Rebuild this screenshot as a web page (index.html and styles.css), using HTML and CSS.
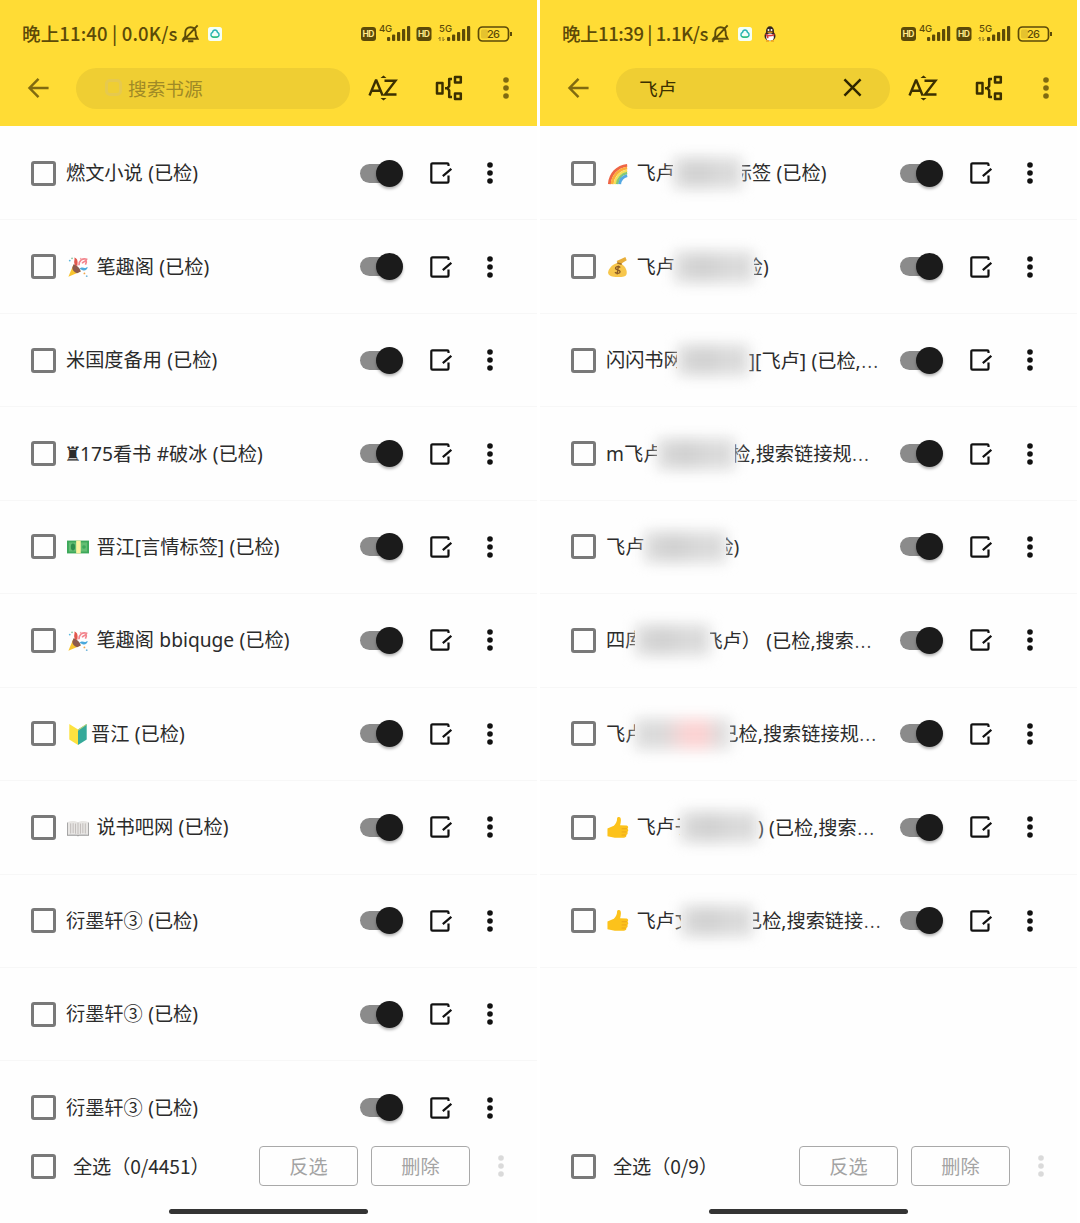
FILE: index.html
```html
<!DOCTYPE html>
<html lang="zh-CN">
<head>
    <meta charset="UTF-8">
    <meta name="viewport" content="width=device-width, initial-scale=1.0">
    <title>书源管理</title>
    <link rel="stylesheet" href="styles.css">
</head>
<body>

<svg class="defs" width="0" height="0">
    <symbol id="mute" viewBox="0 0 20 20">
        <path d="M4.500 14.500V9.200C4.500 5.800 6.800 3.400 10 3.400c3 0 5.300 2.200 5.500 5.600v2.500l2 4H2.500l2-2.600M7.500 18.200h5.500M1.500 18.500L17.500 1.500" fill="none" stroke="currentColor" stroke-width="2"/>
    </symbol>
    <symbol id="app" viewBox="0 0 14 14">
        <rect width="14" height="14" rx="2.500" fill="#f4fff8"/>
        <path d="M4.600 5.200C5.200 2.200 8.800 2.200 9.400 5.200c2.600 1.200 2 4.900-.6 5H5.200c-2.600-.1-3.200-3.800-.6-5z" fill="none" stroke="#2cb6b4" stroke-width="1.500"/>
        <path d="M4 9.500c1 .8 4.500 1 6 0" stroke="#35c46a" stroke-width="1.300" fill="none"/>
    </symbol>
    <symbol id="qq" viewBox="0 0 14 16">
        <ellipse cx="7" cy="10" rx="5.500" ry="5" fill="#33251f"/>
        <ellipse cx="7" cy="5" rx="4" ry="4.700" fill="#33251f"/>
        <ellipse cx="7" cy="11.200" rx="3.800" ry="3.600" fill="#fff"/>
        <circle cx="5.500" cy="4" r="1" fill="#fff"/><circle cx="8.500" cy="4" r="1" fill="#fff"/>
        <path d="M4.500 6.200h5" stroke="#f5a623" stroke-width="1.200"/>
        <path d="M2.500 7.500c2.500 1.800 6.500 1.800 9 0v1.700c-2 1.200-4.500 1.300-6 1.100v2H3.800V9.700l-1.300-.6z" fill="#dc3a3a"/>
        <path d="M3 15h3M8 15h3" stroke="#f0a020" stroke-width="1.500"/>
    </symbol>
    <symbol id="back" viewBox="0 0 24 24">
        <path d="M23 12H2.500M12 2L2.200 12 12 22" fill="none" stroke="currentColor" stroke-width="2.700"/>
    </symbol>
    <symbol id="close" viewBox="0 0 20 20">
        <path d="M1.500 1.500l17 17M18.500 1.500l-17 17" stroke="currentColor" stroke-width="2.600"/>
    </symbol>
    <symbol id="sort" viewBox="0 0 30 28">
        <path d="M1.500 21.500L7.800 6.500h.6l6.200 15M3.800 16.700h8.800M16.500 6.700h11L17 20.500h11.500" fill="none" stroke="currentColor" stroke-width="2.400"/>
        <path d="M12.500 4l3-2.500 3 2.500zM12.500 24l3 2.500 3-2.500z" fill="currentColor"/>
    </symbol>
    <symbol id="group" viewBox="0 0 28 26">
        <path d="M2 8h5.500v10.500H2zM10 13.200h2.500M17 4h-2.800v7l-1.700 2.200 1.700 2.200V22H17M20 2h5.800v5.500h-5.800zM20 18.500h5.800v5.500h-5.800z" fill="none" stroke="currentColor" stroke-width="2.500" stroke-linejoin="round"/>
    </symbol>
    <symbol id="more" viewBox="0 0 6 24">
        <circle cx="3" cy="4" r="2.800"/><circle cx="3" cy="12" r="2.800"/><circle cx="3" cy="20" r="2.800"/>
    </symbol>
    <symbol id="edit" viewBox="0 0 22 22">
        <path d="M18.500 4V2.500a1.200 1.200 0 0 0-1.200-1.200H2.500a1.200 1.200 0 0 0-1.200 1.200v17a1.200 1.200 0 0 0 1.200 1.200h14.800a1.200 1.200 0 0 0 1.200-1.200V13.500M12.800 14.200L21.300 6.800" fill="none" stroke="currentColor" stroke-width="2.200"/>
    </symbol>

    <symbol id="party" viewBox="0 0 24 24">
        <path d="M7 9.500L1.500 22.500 15 17z" fill="#f9c52f"/>
        <path d="M7 9.500c.5-2 7.500 3.500 8 7.500l-4 1.700C7.500 17.500 5.500 15 5.800 12.500z" fill="#8d5a4c"/>
        <path d="M9 10C6.500 6 9 4 8 1.500c4 1 4 5 3.200 9.500z" fill="#e2574c"/>
        <path d="M13 10c0-5 4-8 8.500-6.500-.5 3-3.500 2-5 4.500M20 9.500c1-2 2-3 0-6" fill="none" stroke="#f2848c" stroke-width="1.800"/>
        <path d="M13.500 14c3-3 5-.5 6.500-1 1.500-.3 1.500-1.300 2.500-1-.2 3-3 4.800-5.500 3.500" fill="#4ba9dc"/>
        <circle cx="3" cy="5" r="1" fill="#5bb7de"/><circle cx="5.500" cy="2.500" r="1" fill="#8bc7a4"/><circle cx="19" cy="19" r="1" fill="#f1a54b"/><circle cx="21.500" cy="22" r="1" fill="#79b9dc"/><circle cx="15" cy="3" r="1" fill="#f5a5aa"/>
    </symbol>
    <symbol id="cash" viewBox="0 0 24 24">
        <path d="M0 5h24v14H0z" fill="#3da85a"/>
        <path d="M2 7h20v10H2z" fill="#64bd73"/>
        <ellipse cx="6.500" cy="12" rx="2.300" ry="3.800" fill="#2e8d4a"/>
        <path d="M10 5h5v14h-5z" fill="#fdf2a0"/>
        <circle cx="18.500" cy="12" r="2" fill="#3da85a"/>
    </symbol>
    <symbol id="sprout" viewBox="0 0 24 24">
        <path d="M2.500 1l9.500 6v17l-9.500-6z" fill="#fde23f"/>
        <path d="M21.500 1L12 7v17l9.500-6z" fill="#35a999"/>
        <path d="M12 7l9-6h.5v1L12 8.500z" fill="#c7d97c"/>
    </symbol>
    <symbol id="book" viewBox="0 0 24 24">
        <path d="M0 6h1v13h10l1 1 1-1h10V6h1v14.500H13l-1 .8-1-.8H0z" fill="#999"/>
        <path d="M1 5.500c3-1.500 8-1.500 11 .5 3-2 8-2 11-.5V19c-3-1-8-1-11 .5C9 18 4 18 1 19z" fill="#e8e6e4"/>
        <path d="M12 6v13.500M4 7v11M6.700 6.800v11M9.300 7.200v11M14.700 7.200v11M17.300 6.800v11M20 7v11" stroke="#bdb9b7" stroke-width="1"/>
    </symbol>
    <symbol id="rainbow" viewBox="0 0 24 24">
        <path d="M2.600 23C3.500 12 11 3.800 22 2.600" fill="none" stroke="#ee6545" stroke-width="3.200"/>
        <path d="M5.600 23C6.500 13.500 13 6.800 22 5.600" fill="none" stroke="#fbad3a" stroke-width="3.200"/>
        <path d="M8.500 23C9.500 15.500 14.500 9.800 22 8.500" fill="none" stroke="#f5df58" stroke-width="2.900"/>
        <path d="M11 23c.8-6 5-11 11-12" fill="none" stroke="#84c876" stroke-width="2.800"/>
        <path d="M13.800 23c.6-4.500 3.700-8.200 8.200-9.200" fill="none" stroke="#53a8e3" stroke-width="3.200"/>
    </symbol>
    <symbol id="money" viewBox="0 0 24 24">
        <path d="M14 8c5 2 8 7 7.500 11-.5 3.500-4 4-10 4S1 21.500 1.200 18C1.500 13.500 6 9 11 7.500z" fill="#f7c64b"/>
        <path d="M12 8l-1.500-2.500L16 3l4-2 1.500 3.500-4 2.500L15 9z" fill="#e8ae3a"/>
        <path d="M11 7.500l5 1.500" stroke="#9c6b2c" stroke-width="1.500"/>
        <path d="M14.500 12.500c-2-1.800-5.500-1-5.200 1 .3 2 5 1.500 5 3.800 0 2.200-4 2.200-5.600.5M12.500 10.500l-1.500 9.500" fill="none" stroke="#8a5a25" stroke-width="1.500"/>
    </symbol>
    <symbol id="thumb" viewBox="0 0 24 24">
        <path d="M.5 12.500l7-3c2.500-2.500 3.500-5 3.500-8 .1-2 3.500-2.200 4 .3.500 2.700-.2 5.200-.7 7.200l7 .3c2.200.2 2.200 3 1 3.400 1.300.8 1.100 3-.2 3.500.9 1.100.4 3-1 3.400.3 1.700-.8 3-2.800 3H8.500L.5 21z" fill="#fcc21b"/>
        <path d="M16 12.800h6M16 16.300h5.500M16 19.700h4.500" stroke="#eba51c" stroke-width="1"/>
    </symbol>
</svg>

<div class="screens">
    <div class="phone" id="phoneAll">
        <header class="header">
            <div class="status">
                <span class="status-time">晚上11:40 | 0.0K/s</span>
                <svg class="status-mute"><use href="#mute"/></svg>
                <svg class="status-app"><use href="#app"/></svg>
                <div class="signals"></div>
            </div>
            <div class="toolbar">
                <svg class="icon-back"><use href="#back"/></svg>
                <div class="search search-empty"><i class="search-icon"></i><span>搜索书源</span></div>
                <svg class="icon-sort"><use href="#sort"/></svg>
                <svg class="icon-group"><use href="#group"/></svg>
                <svg class="icon-more"><use href="#more"/></svg>
            </div>
        </header>
        <main class="list"></main>
        <footer class="footer">
            <div class="actions">
                <span class="checkbox"></span>
                <span class="select-all">全选（0/4451）</span>
                <button>反选</button>
                <button>删除</button>
                <svg class="icon-more"><use href="#more"/></svg>
            </div>
            <div class="home-bar"></div>
        </footer>
    </div>

    <div class="phone" id="phoneSearch">
        <header class="header">
            <div class="status">
                <span class="status-time">晚上11:39 | 1.1K/s</span>
                <svg class="status-mute"><use href="#mute"/></svg>
                <svg class="status-app"><use href="#app"/></svg>
                <svg class="status-qq"><use href="#qq"/></svg>
                <div class="signals"></div>
            </div>
            <div class="toolbar">
                <svg class="icon-back"><use href="#back"/></svg>
                <div class="search"><span>飞卢</span><svg class="icon-close"><use href="#close"/></svg></div>
                <svg class="icon-sort"><use href="#sort"/></svg>
                <svg class="icon-group"><use href="#group"/></svg>
                <svg class="icon-more"><use href="#more"/></svg>
            </div>
        </header>
        <main class="list"></main>
        <footer class="footer">
            <div class="actions">
                <span class="checkbox"></span>
                <span class="select-all">全选（0/9）</span>
                <button>反选</button>
                <button>删除</button>
                <svg class="icon-more"><use href="#more"/></svg>
            </div>
            <div class="home-bar"></div>
        </footer>
    </div>
</div>

<script src="script.js"></script>
</body>
</html>
```

FILE: styles.css
```css
* { box-sizing: border-box; }
body { margin: 0; background: #fff; color: #2b2b2b; font-family: "Noto Sans", "Noto Sans CJK SC", sans-serif; font-size: 19.200px; }
svg { display: block; flex: none; }
.defs { position: absolute; }
.screens { display: flex; gap: 3px; height: 1223px; overflow: hidden; }
.phone { width: 537px; height: 1223px; display: flex; flex-direction: column; background: #fefefe; }

/* header */
.header { height: 126px; flex: none; background: #ffdc35; }
.status { height: 67px; padding: 0 25px 0 22px; display: flex; align-items: center; color: #5c4a08; }
.status-time { width: 156px; padding-bottom: 2px; font-family: "Noto Sans CJK SC", sans-serif; font-weight: 500; font-size: 18.500px; letter-spacing: .15px; line-height: 24px; white-space: nowrap; }
.status-mute { width: 19px; height: 19px; margin-left: 3px; }
.status-app { width: 14px; height: 14px; margin-left: 8px; }
.status-qq { width: 14px; height: 16px; margin-left: 11px; }
.signals { margin-left: auto; }
.signals text { font-family: Inter, sans-serif; font-weight: 500; fill: #5c4a08; }
.signals .hd { fill: #ffe98a; font-weight: 700; }
#phoneSearch .status-time { width: 146px; letter-spacing: -.45px; }
#phoneSearch .status-app { margin-left: 8px; }

.toolbar { height: 42px; padding-left: 27px; display: flex; align-items: center; }
.icon-back { width: 23px; height: 22px; color: #806a10; }
.search { width: 274px; height: 41px; margin-left: 26px; padding: 0 28px 2px 23px; border-radius: 21px; background: #efce33; display: flex; align-items: center; justify-content: space-between; font-size: 18.700px; color: #3b2f00; }
.search-empty { justify-content: flex-start; color: #a08a26; padding-left: 29px; }
.search-icon { width: 17px; height: 17px; margin-right: 6px; border: 3px solid #e6c94e; border-radius: 5px; }
.icon-close { width: 19px; height: 19px; color: #2e2600; }
.icon-sort { width: 30px; height: 28px; margin-left: 18px; color: #3b2f00; }
.icon-group { width: 28px; height: 26px; margin-left: 37px; color: #3b2f00; }
.toolbar .icon-more { width: 6px; height: 24px; margin-left: 40px; fill: #806a10; }

/* list */
.list { flex: 1; min-height: 0; padding-top: 1px; overflow: hidden; }
.row { height: 93.450px; padding-left: 31px; border-bottom: 1px solid #f7f7f7; display: flex; align-items: center; }
.checkbox { width: 25px; height: 25px; flex: none; border: 3px solid #797979; border-radius: 3px; }
.name { width: 294px; margin-left: 10px; display: flex; align-items: center; white-space: pre; line-height: 28px; word-spacing: .4px; }
.emoji { width: 22px; height: 22px; margin: 1px 2px 0 1px; }
.rook { width: 14px; display: inline-block; font-family: "DejaVu Sans", sans-serif; font-size: 20px; text-indent: -2px; }
.dots { display: inline-block; line-height: 1; font-family: "Open Sans", "Noto Sans", sans-serif; font-weight: 300; font-size: 25px; color: #444; }
.smudge { position: relative; z-index: 1; height: 40px; flex: none; background: #fdfdfd; }
.smudge::before { content: ""; position: absolute; inset: 5px 0; background: linear-gradient(90deg, #dedede, #d0d0d0 35%, #d9d9d9 65%, #dcdcdc); filter: blur(7px); }
.smudge.red::before { background: linear-gradient(90deg, #dcdcdc, #dadada 30%, #f7d6d6 50%, #ffd0d0 68%, #dfdfdf 90%, #dadada); }
.switch { width: 44px; height: 28px; flex: none; display: flex; align-items: center; }
.switch::before { content: ""; width: 34px; height: 19px; border-radius: 10px; background: #8b8b8b; }
.switch::after { content: ""; width: 27px; height: 27px; margin-left: -18px; flex: none; border-radius: 50%; background: #1b1b1b; box-shadow: 0 2px 3px rgba(0, 0, 0, .3); }
.icon-edit { width: 22px; height: 22px; margin-left: 26px; color: #111; }
.row .icon-more { width: 6px; height: 24px; margin-left: 35px; fill: #111; }

/* footer */
.footer { height: 88px; flex: none; background: #fefefe; }
.actions { height: 62px; padding-left: 31px; display: flex; align-items: center; }
.select-all { width: 186px; margin-left: 17px; white-space: nowrap; font-family: "Noto Sans CJK SC", sans-serif; letter-spacing: -.1px; }
.actions button { width: 99px; height: 40px; padding: 0; margin-right: 13px; background: none; border: 1px solid #a9a9a9; border-radius: 4px; color: #a3a3a3; font: inherit; }
.actions .icon-more { width: 6px; height: 24px; margin-left: 15px; fill: #dadada; }
.home-bar { width: 199px; height: 5px; margin: 12px auto 0 169px; border-radius: 3px; background: #343434; }
```

FILE: script.js
```js
const allSources = [
    { post: "燃文小说 (已检)" },
    { emoji: "party", post: " 笔趣阁 (已检)" },
    { post: "米国度备用 (已检)" },
    { rook: true, post: "175看书 #破冰 (已检)" },
    { emoji: "cash", post: " 晋江[言情标签] (已检)" },
    { emoji: "party", post: " 笔趣阁 bbiquge (已检)" },
    { emoji: "sprout", post: "晋江 (已检)" },
    { emoji: "book", post: " 说书吧网 (已检)" },
    { post: "衍墨轩③ (已检)" },
    { post: "衍墨轩③ (已检)" },
    { post: "衍墨轩③ (已检)" }
];

// hide: [left overlap, width, right overlap] of the hidden part
const foundSources = [
    { emoji: "rainbow", pre: " 飞卢", hide: [2, 69, 9], post: "标签 (已检)" },
    { emoji: "money", pre: " 飞卢", hide: [1, 80, 10], post: "检)" },
    { pre: "闪闪书网", hide: [6, 72, 0], post: "][飞卢] (已检,…" },
    { pre: "m飞卢", hide: [5, 78, 4], post: "检,搜索链接规…" },
    { pre: "飞卢", hide: [0, 82, 12], post: "检)" },
    { pre: "四库", hide: [9, 75, 7], post: "飞卢） (已检,搜索…" },
    { pre: "飞卢", hide: [9, 95, 11], post: "已检,搜索链接规…", red: true },
    { emoji: "thumb", pre: " 飞卢子", hide: [14, 78, 0], post: ") (已检,搜索…" },
    { emoji: "thumb", pre: " 飞卢文", hide: [13, 72, 10], post: "已检,搜索链接…" }
];

function makeRow(s) {
    let name = "";
    if (s.emoji) name += `<svg class="emoji"><use href="#${s.emoji}"/></svg>`;
    if (s.rook) name += '<span class="rook">♜</span>';
    if (s.pre) name += `<span>${s.pre}</span>`;
    if (s.hide) {
        const [l, w, r] = s.hide;
        name += `<span class="smudge${s.red ? " red" : ""}" style="width:${w}px;margin:0 -${r}px 0 -${l}px"></span>`;
    }
    name += `<span>${s.post.replace("…", '<span class="dots">…</span>')}</span>`;
    return `<div class="row"><span class="checkbox"></span><div class="name">${name}</div>
        <span class="switch"></span>
        <svg class="icon-edit"><use href="#edit"/></svg>
        <svg class="icon-more"><use href="#more"/></svg></div>`;
}

function bars(x) {
    return [4, 6.5, 9, 12, 15].map((h, i) =>
        `<rect x="${x + i * 5}" y="${18 - h}" width="3.2" height="${h}" rx="1" fill="#5c4a08"/>`).join("");
}

const signals = `<svg width="152" height="22" viewBox="0 0 152 22">
    <rect x="1" y="4" width="15" height="14" rx="3" fill="#5c4a08"/>
    <text class="hd" x="2.500" y="14" font-size="8.500" textLength="12">HD</text>
    <text x="19" y="9" font-size="9.500" textLength="13">4G</text>${bars(27)}
    <rect x="56.500" y="4" width="15" height="14" rx="3" fill="#5c4a08"/>
    <text class="hd" x="58" y="14" font-size="8.500" textLength="12">HD</text>
    <text x="79" y="9" font-size="9.500" textLength="13">5G</text>
    <path d="M80 18v-4l-1.500 2M83 14v4l1.500-2" fill="none" stroke="#907822" stroke-width="1"/>${bars(87)}
    <rect x="118.500" y="4" width="30" height="14" rx="4" fill="none" stroke="#5c4a08" stroke-width="1.700"/>
    <rect x="121" y="6.500" width="7" height="9" rx="1.500" fill="#e5c22e"/>
    <rect x="150" y="9" width="2" height="4" fill="#5c4a08"/>
    <text x="127" y="15" font-size="11" textLength="13">26</text>
</svg>`;

document.querySelectorAll(".signals").forEach(el => el.innerHTML = signals);
document.querySelector("#phoneAll .list").innerHTML = allSources.map(makeRow).join("");
document.querySelector("#phoneSearch .list").innerHTML = foundSources.map(makeRow).join("");
```
